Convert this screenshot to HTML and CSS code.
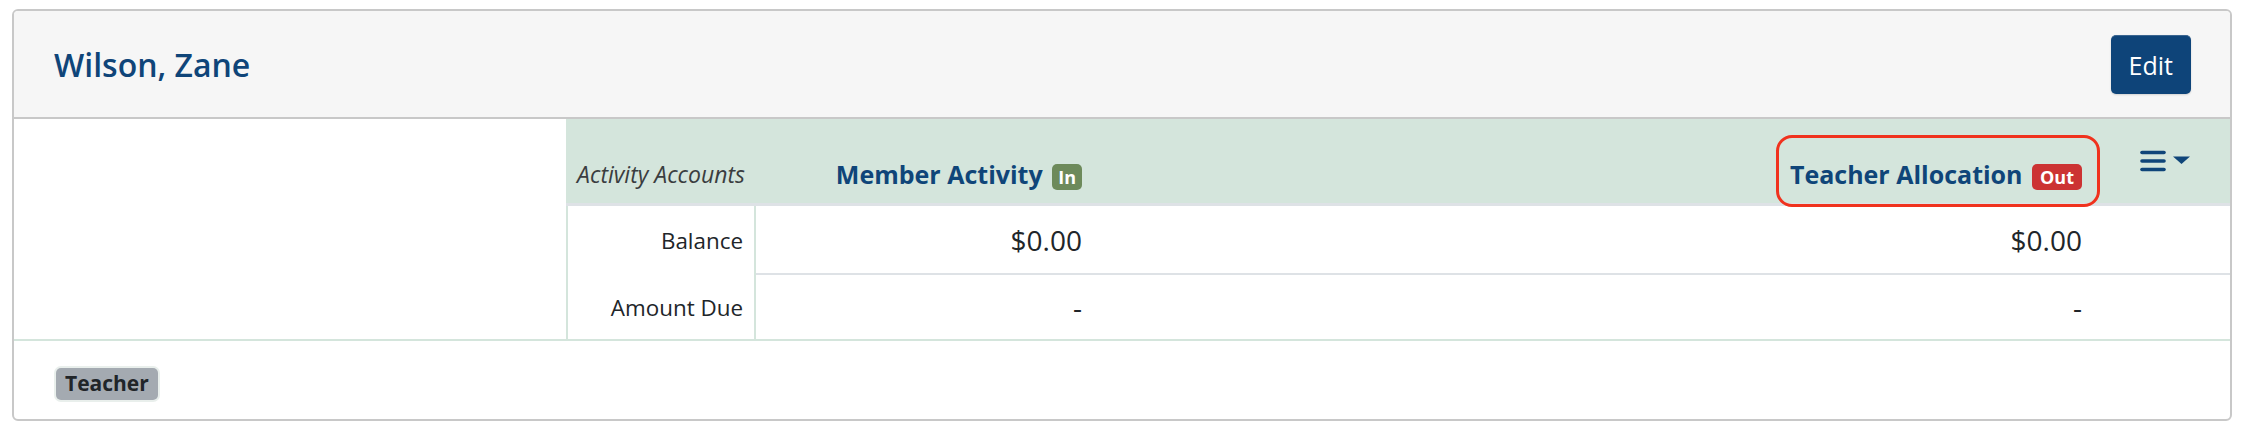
FILE: index.html
```html
<!DOCTYPE html>
<html lang="en">
<head>
    <meta charset="UTF-8">
    <meta name="viewport" content="width=device-width, initial-scale=1.0">
    <title>Wilson, Zane</title>
    <link rel="stylesheet" href="styles.css">
</head>
<body>
    <div class="card">
        <div class="card-head">
            <h2>Wilson, Zane</h2>
            <button class="btn-edit" type="button">Edit</button>
        </div>
        <div class="card-body">
            <div class="side"></div>
            <table class="accounts">
                <colgroup>
                    <col class="c-label">
                    <col class="c-member">
                    <col class="c-teacher">
                    <col>
                </colgroup>
                <thead>
                    <tr>
                        <th class="lbl">Activity Accounts</th>
                        <th class="num"><span class="col-title">Member Activity <span class="badge in">In</span></span></th>
                        <th class="num"><span class="col-title marked">Teacher Allocation <span class="badge out">Out</span></span></th>
                        <th class="menu">
                            <svg width="50" height="22" viewBox="0 0 50 22">
                                <g stroke="#0f4579" stroke-width="3.6" stroke-linecap="round">
                                    <line x1="2" y1="2.5" x2="24" y2="2.5"/>
                                    <line x1="2" y1="11" x2="24" y2="11"/>
                                    <line x1="2" y1="19.5" x2="24" y2="19.5"/>
                                </g>
                                <polygon points="33,6.5 50,6.5 41.5,14" fill="#0f4579"/>
                            </svg>
                        </th>
                    </tr>
                </thead>
                <tbody>
                    <tr class="first">
                        <td class="lbl">Balance</td>
                        <td class="num">$0.00</td>
                        <td class="num">$0.00</td>
                        <td class="rest"></td>
                    </tr>
                    <tr class="last">
                        <td class="lbl">Amount Due</td>
                        <td class="num">-</td>
                        <td class="num">-</td>
                        <td class="rest"></td>
                    </tr>
                </tbody>
            </table>
        </div>
        <div class="card-foot">
            <span class="tag">Teacher</span>
        </div>
    </div>
</body>
</html>
```

FILE: styles.css
```css
body {
    margin: 0;
    padding: 9px 10px 0 12px;
    background: white;
    font-family: "Open Sans", "Liberation Sans", sans-serif;
    color: #212529;
}

.card {
    border: 2px solid #c8c8c8;
    border-radius: 6px;
    overflow: hidden;
    background: white;
}

.card-head {
    display: flex;
    align-items: center;
    justify-content: space-between;
    height: 106px;
    padding: 0 39px 0 40px;
    background: #f6f6f6;
    border-bottom: 2px solid #c8c8c8;
}

.card-head h2 {
    margin: 0;
    font-size: 32px;
    font-weight: 600;
    color: #0f4579;
}

.btn-edit {
    padding: 10px 18px;
    font-family: inherit;
    font-size: 25px;
    line-height: 38px;
    color: white;
    background: #0e4479;
    border: none;
    border-top: 1px solid #3a6590;
    border-radius: 5px;
    box-shadow: 0 1px 2px rgba(0, 0, 0, 0.15);
}

.card-body {
    display: grid;
    grid-template-columns: 552px 1fr;
}

.accounts {
    width: 100%;
    table-layout: fixed;
    border-collapse: separate;
    border-spacing: 0;
}

.c-label {
    width: 190px;
}

.c-member {
    width: 337px;
}

.c-teacher {
    width: 1000px;
}

.accounts th {
    height: 87px;
    padding: 0 11px 12px;
    box-sizing: border-box;
    background: #d4e5dc;
    border-bottom: 3px solid #dee2e6;
    line-height: 34px;
    vertical-align: bottom;
    white-space: nowrap;
}

.accounts th.lbl {
    text-align: right;
    font-size: 23px;
    font-weight: 400;
    font-style: italic;
    color: #3a3d40;
}

.accounts th.num {
    text-align: right;
    font-size: 25px;
    font-weight: 700;
    color: #0f4579;
}

.accounts th.menu {
    padding: 0 0 0 47px;
    text-align: left;
    vertical-align: middle;
}

.accounts th.menu svg {
    display: block;
}

.col-title {
    display: inline-block;
    position: relative;
}

.col-title.marked::after {
    content: "";
    position: absolute;
    top: -22px;
    bottom: -16px;
    left: -14px;
    right: -18px;
    border: 3px solid #f0321e;
    border-radius: 16px;
}

.badge {
    display: inline-block;
    margin-left: 3px;
    padding: 4px 8px;
    font-size: 18px;
    font-weight: 700;
    line-height: 1;
    color: white;
    border-radius: 5px;
}

.badge.in {
    padding: 4px 6px;
    background: #6d8a5b;
}

.badge.out {
    background: #cc3333;
}

.accounts td {
    padding: 0 11px;
    vertical-align: middle;
    text-align: right;
}

.accounts td.lbl {
    font-size: 22.4px;
    border-left: 2px solid #d4e5dc;
    border-right: 2px solid #d4e5dc;
}

.accounts td.num {
    font-size: 28px;
}

.accounts tr.first td {
    height: 67px;
}

.accounts tr.first td.num,
.accounts tr.first td.rest {
    border-bottom: 2px solid #dee2e6;
}

.accounts tr.last td {
    height: 64px;
}

.card-foot {
    height: 80px;
    box-sizing: border-box;
    padding: 27px 42px 0;
    border-top: 2px solid #d4e5dc;
}

.tag {
    display: inline-block;
    padding: 5px 9px 6px;
    font-size: 21px;
    font-weight: 700;
    line-height: 21px;
    color: #212529;
    background: #a4aab1;
    border-radius: 5px;
    box-shadow: 0 0 0 2px #e9efec;
}
```
